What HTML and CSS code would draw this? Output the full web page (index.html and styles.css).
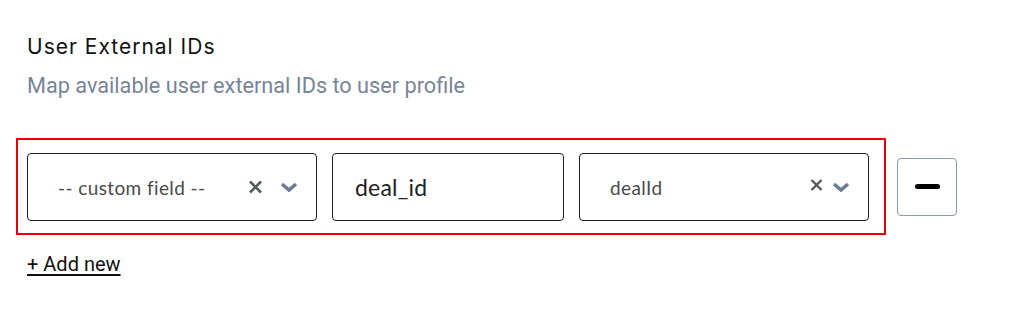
FILE: index.html
```html
<!DOCTYPE html>
<html>
<head>
<meta charset="utf-8">
<link rel="stylesheet" href="styles.css">
</head>
<body>
<div class="page">
  <h2 class="title">User External IDs</h2>
  <p class="subtitle">Map available user external IDs to user profile</p>
  <div class="row">
    <div class="box">
      <div class="select wide">
        <span class="value">-- custom field --</span>
        <span class="icons">
          <svg class="clear" width="15" height="14" viewBox="0 0 15 14"><path d="M2 1.5 L13 12.5 M13 1.5 L2 12.5" stroke="#555a60" stroke-width="2.6" stroke-linecap="butt"/></svg>
          <svg class="chev" width="18" height="10" viewBox="0 0 18 10"><path d="M2 2 L9 8 L16 2" fill="none" stroke="#6b7d95" stroke-width="3.6" stroke-linejoin="miter"/></svg>
        </span>
      </div>
      <div class="input"><span class="ival">deal_id</span></div>
      <div class="select wide">
        <span class="value">dealId</span>
        <span class="icons small">
          <svg class="clear" width="13" height="12" viewBox="0 0 13 12"><path d="M1.5 1 L11.5 11 M11.5 1 L1.5 11" stroke="#555a60" stroke-width="2.4"/></svg>
          <svg class="chev" width="18" height="10" viewBox="0 0 18 10"><path d="M2 2 L9 8 L16 2" fill="none" stroke="#6b7d95" stroke-width="3.6"/></svg>
        </span>
      </div>
    </div>
    <button class="remove"><span class="bar"></span></button>
  </div>
  <a class="add" href="#">+ Add new</a>
</div>
</body>
</html>
```

FILE: styles.css
```css
* { box-sizing: border-box; }
body {
  margin: 0;
  background: #fff;
  width: 1024px;
  height: 333px;
  overflow: hidden;
}
.page {
  padding: 33px 0 0 16px;
}
.title {
  margin: 0 0 0 11px;
  font-family: Inter, "Open Sans", sans-serif;
  font-weight: 400;
  font-size: 21px;
  line-height: 28px;
  color: #111;
  letter-spacing: 1px;
}
.subtitle {
  margin: 12px 0 0 11px;
  font-family: Roboto, sans-serif;
  font-size: 21.7px;
  line-height: 26px;
  color: #77849a;
}
.row {
  display: flex;
  align-items: center;
  margin-top: 39px;
}
.box {
  display: flex;
  gap: 15px;
  width: 870px;
  border: 2px solid #e8000d;
  padding: 13px 15px 12px 9px;
}
.select, .input {
  height: 68px;
  border: 1px solid #1e1e1e;
  border-radius: 4px;
  display: flex;
  align-items: center;
  font-family: Lato, sans-serif;
  color: #444;
}
.wide { width: 290px; padding: 0 18px 0 30px; }
.input { width: 232px; padding: 0 22px; }
.value {
  flex: 1;
  font-size: 19px;
  letter-spacing: 0.4px;
  color: #4a4a4a;
}
.ival {
  font-size: 23px;
  color: #222;
  letter-spacing: 0.2px;
}
.icons {
  display: flex;
  align-items: center;
  gap: 17px;
}
.icons.small { gap: 9px; }
.icons.small .clear { margin-top: -4px; }
.icons svg { display: block; }
.remove {
  margin-left: 11px;
  width: 60px;
  height: 58px;
  border: 1px solid #8a98ad;
  border-radius: 4px;
  background: #fff;
  display: flex;
  align-items: center;
  justify-content: center;
  padding: 0;
}
.bar {
  display: block;
  width: 25px;
  height: 5px;
  border-radius: 3px;
  background: #000;
}
.add {
  display: inline-block;
  margin: 17px 0 0 11px;
  font-family: Roboto, sans-serif;
  font-size: 20px;
  color: #111;
  text-decoration: underline;
  text-underline-offset: 3px;
}
```
